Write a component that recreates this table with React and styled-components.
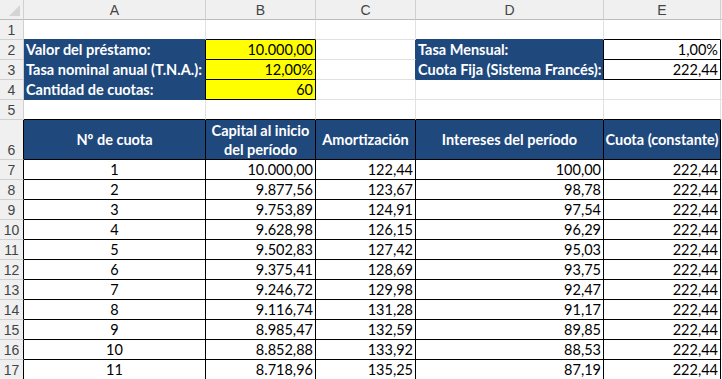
import styled, { createGlobalStyle } from 'styled-components'

const GlobalStyle = createGlobalStyle`
  html, body {
    margin: 0;
    padding: 0;
    background: #fff;
    overflow: hidden;
  }
  body {
    font-family: Lato, 'Liberation Sans', sans-serif;
  }
`

const BLUE = '#1f497d'
const YELLOW = '#ffff00'
const GRID = '#e1e1e1'
const HEAD_LINE = '#d0d0d0'

const Sheet = styled.div`
  display: grid;
  grid-template-columns: 24px 182px 110px 100px 188px 117px 1fr;
  grid-template-rows: 20px repeat(5, 20px) 40px repeat(11, 20px);
  width: 722px;
  overflow: hidden;
  font-size: 14.5px;
`

const Corner = styled.div`
  position: relative;
  background: #f0f0f0;
  border-right: 1px solid ${HEAD_LINE};
  border-bottom: 1px solid #bdbdbd;
  &::after {
    content: '';
    position: absolute;
    right: 3px;
    bottom: 3px;
    width: 11px;
    height: 11px;
    background: #d4d4d4;
    clip-path: polygon(100% 0, 100% 100%, 0 100%);
  }
`

const ColHead = styled.div`
  background: #f0f0f0;
  color: #444;
  display: flex;
  align-items: center;
  justify-content: center;
  border-right: 1px solid ${HEAD_LINE};
  border-bottom: 1px solid #bdbdbd;
  font-family: 'Liberation Sans', sans-serif;
  font-size: 14px;
`

const RowHead = styled.div`
  background: #f0f0f0;
  color: #444;
  display: flex;
  align-items: ${(p) => (p.$tall ? 'flex-end' : 'center')};
  justify-content: center;
  padding-bottom: ${(p) => (p.$tall ? '1px' : '0')};
  border-right: 1px solid ${(p) => p.$edge};
  border-bottom: 1px solid ${HEAD_LINE};
  font-family: 'Liberation Sans', sans-serif;
  font-size: 14px;
`

const Cell = styled.div`
  display: flex;
  align-items: center;
  justify-content: ${(p) => p.$align};
  text-align: center;
  padding: 0 2px;
  min-width: 0;
  overflow: hidden;
  white-space: nowrap;
  line-height: 19px;
  background: ${(p) => p.$fill || '#fff'};
  color: ${(p) => (p.$fill === BLUE ? '#fff' : '#000')};
  font-weight: ${(p) => (p.$bold ? 700 : 400)};
  border-right: 1px solid ${(p) => p.$right};
  border-bottom: 1px solid ${(p) => p.$bottom};
`

const Wrap = styled.span`
  white-space: normal;
  line-height: 19px;
`

const COLS = ['A', 'B', 'C', 'D', 'E', '']

const rows = [
  [1, '10.000,00', '122,44', '100,00', '222,44'],
  [2, '9.877,56', '123,67', '98,78', '222,44'],
  [3, '9.753,89', '124,91', '97,54', '222,44'],
  [4, '9.628,98', '126,15', '96,29', '222,44'],
  [5, '9.502,83', '127,42', '95,03', '222,44'],
  [6, '9.375,41', '128,69', '93,75', '222,44'],
  [7, '9.246,72', '129,98', '92,47', '222,44'],
  [8, '9.116,74', '131,28', '91,17', '222,44'],
  [9, '8.985,47', '132,59', '89,85', '222,44'],
  [10, '8.852,88', '133,92', '88,53', '222,44'],
  [11, '8.718,96', '135,25', '87,19', '222,44'],
]

// cells keyed "row-col", row 1..17, col 1..6
const cells = {}
const put = (r, c, cell) => {
  cells[`${r}-${c}`] = cell
}

put(2, 1, { text: 'Valor del préstamo:', fill: BLUE, bold: true })
put(3, 1, { text: 'Tasa nominal anual (T.N.A.):', fill: BLUE, bold: true })
put(4, 1, { text: 'Cantidad de cuotas:', fill: BLUE, bold: true })
put(2, 2, { text: '10.000,00', fill: YELLOW, align: 'flex-end', boxed: true })
put(3, 2, { text: '12,00%', fill: YELLOW, align: 'flex-end', boxed: true })
put(4, 2, { text: '60', fill: YELLOW, align: 'flex-end', boxed: true })
put(2, 4, { text: 'Tasa Mensual:', fill: BLUE, bold: true })
put(3, 4, { text: 'Cuota Fija (Sistema Francés):', fill: BLUE, bold: true })
put(2, 5, { text: '1,00%', align: 'flex-end', boxed: true })
put(3, 5, { text: '222,44', align: 'flex-end', boxed: true })

const heads = ['Nº de cuota', 'Capital al inicio del período', 'Amortización', 'Intereses del período', 'Cuota (constante)']
heads.forEach((h, i) =>
  put(6, i + 1, { text: h, fill: BLUE, bold: true, align: 'center', boxed: true, wrap: i === 1 }),
)
rows.forEach((row, i) =>
  row.forEach((v, j) =>
    put(7 + i, j + 1, { text: String(v), align: j === 0 ? 'center' : 'flex-end', boxed: true }),
  ),
)

const get = (r, c) => cells[`${r}-${c}`] || {}

// colour of the line shared by two neighbouring cells
const edge = (a, b) => {
  if (a.boxed || b.boxed) return '#000'
  if (a.fill) return a.fill
  if (b.fill) return b.fill
  return GRID
}

export default function App() {
  const out = []
  out.push(<Corner key="corner" />)
  COLS.forEach((c, i) => out.push(<ColHead key={`h${i}`}>{c}</ColHead>))
  for (let r = 1; r <= 17; r++) {
    out.push(
      <RowHead key={`r${r}`} $tall={r === 6} $edge={get(r, 1).boxed ? '#000' : HEAD_LINE}>
        {r}
      </RowHead>,
    )
    for (let c = 1; c <= 6; c++) {
      const cell = get(r, c)
      out.push(
        <Cell
          key={`${r}-${c}`}
          $fill={cell.fill}
          $bold={cell.bold}
          $align={cell.align || 'flex-start'}
          $right={edge(cell, get(r, c + 1))}
          $bottom={edge(cell, get(r + 1, c))}
        >
          {cell.wrap ? <Wrap>{cell.text}</Wrap> : cell.text}
        </Cell>,
      )
    }
  }

  return (
    <>
      <GlobalStyle />
      <Sheet>{out}</Sheet>
    </>
  )
}
